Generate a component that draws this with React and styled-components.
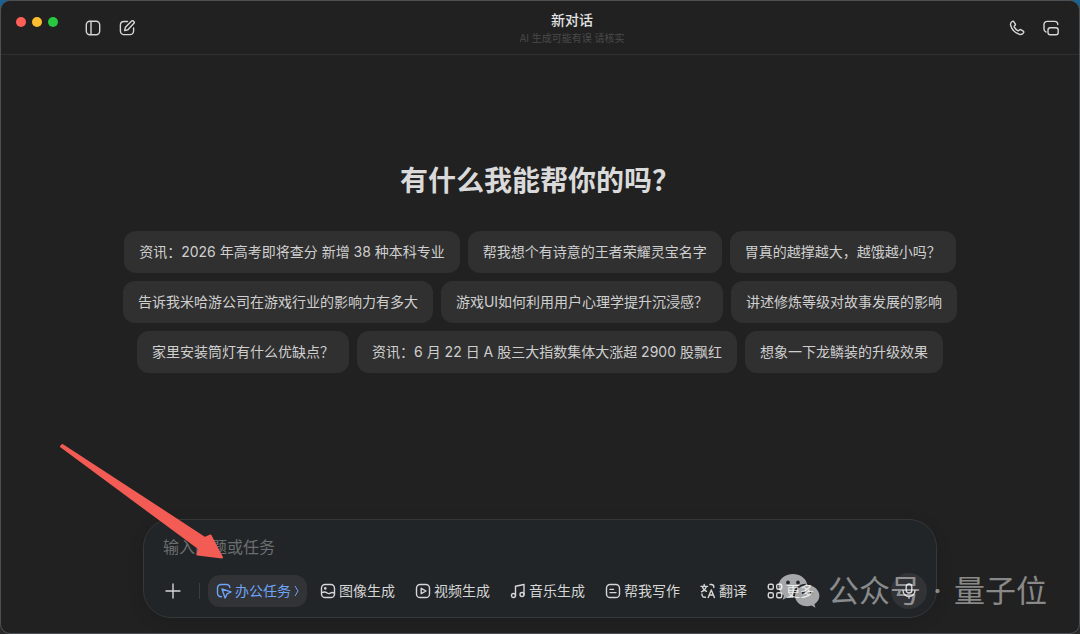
import React from 'react'
import styled, { createGlobalStyle } from 'styled-components'

const GlobalStyle = createGlobalStyle`
  * {
    box-sizing: border-box;
  }
  html, body, #root {
    height: 100%;
    margin: 0;
  }
  body {
    overflow: hidden;
    background: linear-gradient(#1a6396 0, #1a6396 40px, #2a2a2a 60px);
    color: #d6d6d6;
    font-family: Inter, "Noto Sans CJK SC", sans-serif;
  }
  button, input {
    font: inherit;
    color: inherit;
  }
`;

const Window = styled.div`
  position: relative;
  height: 100%;
  display: flex;
  flex-direction: column;
  background: #212121;
  border: 1px solid #4e5153;
  border-radius: 10px;
  overflow: hidden;
`;

const Header = styled.header`
  height: 54px;
  flex: none;
  display: flex;
  border-bottom: 1px solid #303030;
`;

const HeaderSide = styled.div`
  display: flex;
  align-items: center;
  justify-content: ${(props) => (props.$end ? 'flex-end' : 'flex-start')};
  gap: 14px;
  width: ${(props) => (props.$end ? '82px' : '146px')};
  padding: 0 18px 0 15px;
`;

const Lights = styled.div`
  display: flex;
  align-self: flex-start;
  gap: 6px;
  padding-top: 16px;
  margin-right: 11px;
`;

const Light = styled.span`
  width: 10px;
  height: 10px;
  border-radius: 50%;
  background: ${(props) => props.$color};
`;

const IconButton = styled.button`
  display: flex;
  flex: none;
  align-items: center;
  justify-content: center;
  width: 20px;
  height: 20px;
  padding: 0;
  border: 0;
  background: none;
  color: #d6d6d6;
  cursor: pointer;
`;

const TitleBox = styled.div`
  flex: 1;
  padding-top: 10px;
  text-align: center;
`;

const Title = styled.h1`
  margin: 0;
  font-size: 14px;
  line-height: 18px;
  font-weight: 500;
  color: #e4e4e4;
`;

const Notice = styled.p`
  margin: 0;
  font-size: 10px;
  line-height: 18px;
  color: #4a4a4a;
`;

const Main = styled.main`
  flex: 1;
  display: flex;
  flex-direction: column;
  align-items: center;
  padding-top: 106px;
`;

const Heading = styled.h2`
  margin: 0 0 30px;
  font-size: 28px;
  line-height: 40px;
  font-weight: 600;
  color: #dadada;
`;

const Suggestions = styled.div`
  display: flex;
  flex-wrap: wrap;
  justify-content: center;
  gap: 8px;
  max-width: 840px;
`;

const Chip = styled.button`
  height: 42px;
  padding: 0 15px;
  border: 0;
  border-radius: 12px;
  background: #303030;
  color: #cfcfcf;
  font-size: 14px;
  line-height: 20px;
  white-space: nowrap;
  cursor: pointer;
`;

const Composer = styled.form`
  width: calc(100% - 284px);
  margin: 0 auto 15px;
  padding: 13px 9px 8px 19px;
  border: 1px solid #35383a;
  border-radius: 28px;
  background: #212527;
  box-shadow: 0 4px 16px rgba(0, 0, 0, 0.12);
`;

const Prompt = styled.input`
  display: block;
  width: 100%;
  height: 28px;
  padding: 0;
  border: 0;
  outline: 0;
  background: none;
  font-size: 16px;
  &::placeholder {
    color: #6b6e70;
    opacity: 1;
  }
`;

const Toolbar = styled.div`
  display: flex;
  align-items: center;
  height: 36px;
  margin-top: 12px;
`;

const Divider = styled.span`
  width: 1px;
  height: 16px;
  margin: 0 8px 0 16px;
  background: #3a3d40;
`;

const Tool = styled.button`
  display: flex;
  align-items: center;
  gap: 3px;
  height: 32px;
  margin-right: ${(props) => (props.$active ? '5px' : '4px')};
  padding: 0 8px;
  border: 0;
  border-radius: 12px;
  background: ${(props) => (props.$active ? '#323336' : 'none')};
  color: ${(props) => (props.$active ? '#6ea3f7' : '#d6d6d6')};
  font-size: 14px;
  line-height: 20px;
  white-space: nowrap;
  cursor: pointer;
`;

const MicButton = styled(IconButton)`
  width: 36px;
  height: 36px;
  margin-left: auto;
  border-radius: 50%;
  background: #323336;
`;

const Watermark = styled.div`
  position: absolute;
  right: 32px;
  bottom: 20px;
  display: flex;
  align-items: center;
  gap: 8px;
  font-size: 31px;
  line-height: 44px;
  font-weight: 400;
  color: rgba(255, 255, 255, 0.48);
  white-space: nowrap;
  pointer-events: none;
`;

const WatermarkText = styled.div`
  display: flex;
  gap: 12px;
`;

const WechatLogo = styled.svg`
  color: rgba(255, 255, 255, 0.6);
`;

const Arrow = styled.svg`
  position: absolute;
  left: 58px;
  bottom: 72px;
  pointer-events: none;
`;

const Svg = ({ size = 16, children }) => (
  <svg width={size} height={size} viewBox="0 0 16 16" fill="none" stroke="currentColor"
    strokeWidth="1.4" strokeLinecap="round" strokeLinejoin="round" aria-hidden="true">
    {children}
  </svg>
);

const icons = {
  sidebar: <><rect x="1.3" y="1.3" width="13.4" height="13.4" rx="3.6" /><path d="M6 1.5v13" /></>,
  compose: <><path d="M8.5 1.5H5A3.6 3.6 0 0 0 1.4 5v6A3.6 3.6 0 0 0 5 14.6h6a3.6 3.6 0 0 0 3.6-3.6V8" /><path d="M12.4 1.3a1.6 1.6 0 0 1 2.3 2.3L8.9 9.8l-3.3.8.8-3.3z" /></>,
  phone: <path d="M3.1 1.5c.6-.5 1.4-.3 1.8.3l1.3 2c.4.6.3 1.2-.2 1.7l-.6.6c-.3.3-.3.6-.1 1 .8 1.4 2 2.6 3.5 3.5.4.2.8.2 1.1-.1l.5-.5c.5-.5 1.2-.6 1.8-.2l2 1.3c.6.4.8 1.2.3 1.8-1 1.3-2.3 1.9-4 1.4C6.3 13 3 9.7 1.7 5.500c-.5-1.7.1-3 1.4-4z" />,
  windows: <><path d="M3 12A3 3 0 0 1 1 9.1V4.6a3.2 3.2 0 0 1 3.2-3.2h7.400a3.2 3.2 0 0 1 3.2 3.2" /><rect x="5" y="7.8" width="10.2" height="7" rx="2.2" /></>,
  plus: <path d="M8 1v14M1 8h14" />,
  cursor: <><path d="M5.5 13.7A3.5 3.5 0 0 1 1.5 10.2V5A3.5 3.5 0 0 1 5 1.5h5.5A3.5 3.5 0 0 1 13.9 4.5" /><path d="M6 6l9 2.8-3.9 2.1-2 4.1z" /></>,
  image: <><rect x="1.5" y="1.5" width="13" height="13" rx="3.6" /><path d="M1.8 9.7c2-1.2 4-.8 5.4.3 1.4 1.1 1.8 1 3 .2 1.4-1 2.8-.8 4.1 0" /><circle cx="5.3" cy="5.4" r=".6" fill="currentColor" /></>,
  video: <><rect x="1.5" y="1.5" width="13" height="13" rx="3.6" /><path d="M6.2 5.3v5.4l4.8-2.7z" /></>,
  music: <><circle cx="3.5" cy="12.5" r="2" /><circle cx="12" cy="11.5" r="2" /><path d="M5.5 12.5V3.2L14 1.5v10" /></>,
  write: <><rect x="1.5" y="1.5" width="13" height="13" rx="3.6" /><path d="M5 6.4h3.5M5 9.6h6" /></>,
  translate: <><path d="M1 3.4h6.5M4.2 1.5v1.9M6.3 3.6C5.6 6 4 7.8 1.5 8.8M2.3 3.6C3 6 4.5 7.6 6.5 8.3M8.2 14.5l3.1-7.5 3.1 7.5M9.3 12h4M10 1.5h1.3a2.5 2.5 0 0 1 2.5 2.5v.5M2 11v.8a2.5 2.5 0 0 0 2.5 2.5h1" /></>,
  more: <><rect x="1.3" y="1.3" width="5" height="5" rx="1.5" /><rect x="9.7" y="1.3" width="5" height="5" rx="1.5" /><rect x="1.3" y="9.7" width="5" height="5" rx="1.5" /><rect x="9.7" y="9.7" width="5" height="5" rx="1.5" /></>,
  mic: <><rect x="5.2" y="1" width="5.6" height="9" rx="2.8" /><path d="M2 7.5a6 6 0 0 0 12 0M8 13.5V15.2" /></>,
};

const suggestions = [
  '资讯：2026 年高考即将查分 新增 38 种本科专业',
  '帮我想个有诗意的王者荣耀灵宝名字',
  '胃真的越撑越大，越饿越小吗？',
  '告诉我米哈游公司在游戏行业的影响力有多大',
  '游戏UI如何利用用户心理学提升沉浸感？',
  '讲述修炼等级对故事发展的影响',
  '家里安装筒灯有什么优缺点？',
  '资讯：6 月 22 日 A 股三大指数集体大涨超 2900 股飘红',
  '想象一下龙鳞装的升级效果',
];

const tools = [
  { icon: 'image', label: '图像生成' },
  { icon: 'video', label: '视频生成' },
  { icon: 'music', label: '音乐生成' },
  { icon: 'write', label: '帮我写作' },
  { icon: 'translate', label: '翻译' },
  { icon: 'more', label: '更多' },
];

const App = () => {
  return (
    <>
      <GlobalStyle />
      <Window>
        <Header>
          <HeaderSide>
            <Lights>
              <Light $color="#ff5f57" />
              <Light $color="#febc2e" />
              <Light $color="#28c840" />
            </Lights>
            <IconButton aria-label="侧边栏"><Svg>{icons.sidebar}</Svg></IconButton>
            <IconButton aria-label="新建对话"><Svg>{icons.compose}</Svg></IconButton>
          </HeaderSide>
          <TitleBox>
            <Title>新对话</Title>
            <Notice>AI 生成可能有误 请核实</Notice>
          </TitleBox>
          <HeaderSide $end>
            <IconButton aria-label="通话"><Svg>{icons.phone}</Svg></IconButton>
            <IconButton aria-label="小窗"><Svg>{icons.windows}</Svg></IconButton>
          </HeaderSide>
        </Header>
        <Main>
          <Heading>有什么我能帮你的吗？</Heading>
          <Suggestions>
            {suggestions.map((text) => (
              <Chip key={text}>{text}</Chip>
            ))}
          </Suggestions>
        </Main>
        <Composer onSubmit={(e) => e.preventDefault()}>
          <Prompt aria-label="输入问题或任务" placeholder="输入问题或任务" />
          <Toolbar>
            <IconButton type="button" aria-label="添加"><Svg>{icons.plus}</Svg></IconButton>
            <Divider />
            <Tool type="button" $active>
              <Svg>{icons.cursor}</Svg>
              办公任务
              <svg width="5" height="12" viewBox="0 0 5 12" fill="none" stroke="currentColor" aria-hidden="true">
                <path d="M1 1l3 5-3 5" />
              </svg>
            </Tool>
            {tools.map(({ icon, label }) => (
              <Tool type="button" key={label}>
                <Svg>{icons[icon]}</Svg>
                {label}
              </Tool>
            ))}
            <MicButton type="button" aria-label="语音输入"><Svg>{icons.mic}</Svg></MicButton>
          </Toolbar>
        </Composer>
        <Watermark>
          <WechatLogo width="42" height="36" viewBox="0 0 42 36" fill="currentColor" aria-hidden="true">
            <path fillRule="evenodd" d="M15 1C7 1 .5 6.400.5 13.200c0 3.800 2.100 7.100 5.400 9.400L4.600 26.800l4.900-2.500c1.900.6 3.600.8 5.900.8-2-8.300 5-14.600 13.800-14.300C27.600 5 21.800 1 15 1zM10 7.500a1.900 1.900 0 1 1 0 3.800 1.900 1.900 0 0 1 0-3.800zm10 0a1.900 1.900 0 1 1 0 3.800 1.900 1.900 0 0 1 0-3.800z" />
            <path fillRule="evenodd" d="M29.300 12.300c-7 0-12.300 4.700-12.300 10.500s5.300 10.500 12.300 10.500c1.500 0 2.900-.3 4.300-.7l3.900 2.100-1.100-3.500c3-2 5-5 5-8.400 0-5.800-5.400-10.500-12.100-10.500zM25.300 18a1.600 1.600 0 1 1 0 3.200 1.600 1.600 0 0 1 0-3.200zm8 0a1.600 1.600 0 1 1 0 3.200 1.600 1.600 0 0 1 0-3.200z" />
          </WechatLogo>
          <WatermarkText>
            <span>公众号</span>
            <span>·</span>
            <span>量子位</span>
          </WatermarkText>
        </Watermark>
        <Arrow width="168" height="118" viewBox="0 0 168 118" aria-hidden="true">
          <path d="M2 3.500L3.500 2 146 95l5.500-2.500 11.500 22-24.500-3 1.500-6z" fill="#f25c54" stroke="#f25c54" strokeWidth="2" strokeLinejoin="round" />
        </Arrow>
      </Window>
    </>
  )
}

export default App
